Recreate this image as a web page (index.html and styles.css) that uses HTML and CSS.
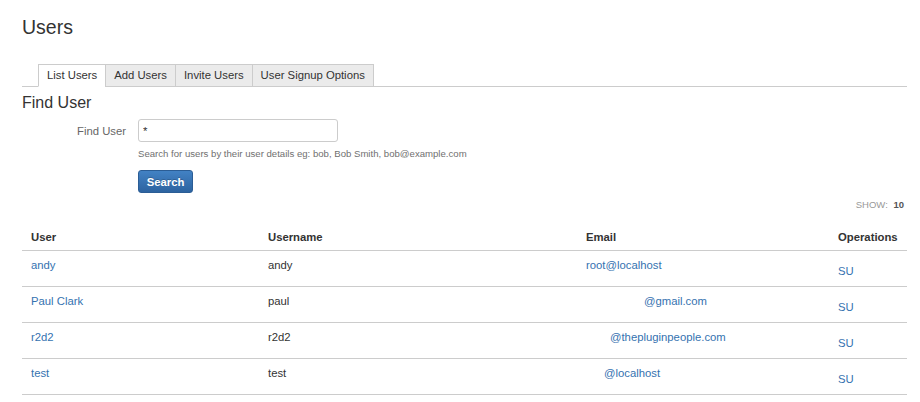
FILE: index.html
```html
<!DOCTYPE html>
<html lang="en">
<head>
<meta charset="utf-8">
<title>Users</title>
<link rel="stylesheet" href="styles.css">
</head>
<body>
<div class="page">
  <h1 class="title">Users</h1>
  <div class="tabs">
    <a class="tab active">List Users</a>
    <a class="tab">Add Users</a>
    <a class="tab">Invite Users</a>
    <a class="tab last">User Signup Options</a>
  </div>
  <h2 class="subtitle">Find User</h2>
  <form class="find-form">
    <div class="field-row">
      <label class="field-label" for="q">Find User</label>
      <input class="text-input" id="q" type="text" value="*">
    </div>
    <div class="help">Search for users by their user details eg: bob, Bob Smith, bob@example.com</div>
    <button class="btn-primary" type="button">Search</button>
  </form>
  <div class="show">SHOW: <b>10</b></div>
  <table class="users">
    <colgroup>
      <col class="c-user"><col class="c-username"><col class="c-email"><col class="c-ops">
    </colgroup>
    <thead>
      <tr><th>User</th><th>Username</th><th>Email</th><th>Operations</th></tr>
    </thead>
    <tbody>
      <tr><td><a href="#">andy</a></td><td>andy</td><td><a href="#">root@localhost</a></td><td class="ops"><a href="#">SU</a></td></tr>
      <tr><td><a href="#">Paul Clark</a></td><td>paul</td><td><span class="redacted r1"></span><a href="#">@gmail.com</a></td><td class="ops"><a href="#">SU</a></td></tr>
      <tr><td><a href="#">r2d2</a></td><td>r2d2</td><td><span class="redacted r2"></span><a href="#">@thepluginpeople.com</a></td><td class="ops"><a href="#">SU</a></td></tr>
      <tr><td><a href="#">test</a></td><td>test</td><td><span class="redacted r3"></span><a href="#">@localhost</a></td><td class="ops"><a href="#">SU</a></td></tr>
    </tbody>
  </table>
</div>
</body>
</html>
```

FILE: styles.css
```css
* { box-sizing: border-box; }
html, body { margin: 0; padding: 0; background: #fff; }
body {
  font-family: "Liberation Sans", Arial, sans-serif;
  font-size: 11.3px;
  color: #333;
}
a { color: #3572b0; text-decoration: none; }

.page { padding: 0 13px 0 22px; }

.title {
  margin: 0;
  padding-top: 15px;
  font-size: 19.5px;
  line-height: 24px;
  font-weight: normal;
  color: #333;
}

.tabs {
  display: flex;
  margin-top: 25px;
  padding-left: 16px;
  border-bottom: 1px solid #ccc;
}
.tab {
  display: block;
  height: 23px;
  line-height: 21px;
  padding: 0 8px;
  border-top: 1px solid #ccc;
  border-left: 1px solid #ccc;
  border-bottom: 1px solid #ccc;
  background: #ebebeb;
  color: #333;
  margin-bottom: -1px;
}
.tab.active { background: #fff; border-bottom-color: #fff; }
.tab.last { border-right: 1px solid #ccc; }

.subtitle {
  margin: 6px 0 0;
  font-size: 16px;
  line-height: 20px;
  font-weight: normal;
  color: #333;
}

.find-form { margin: 6px 0 0; }
.field-row { display: flex; align-items: center; gap: 12px; }
.field-label { width: 104px; text-align: right; color: #666; }
.text-input {
  width: 200px;
  height: 23px;
  border: 1px solid #ccc;
  border-radius: 3px;
  padding: 0 4px;
  font: inherit;
  color: #333;
  margin: 0;
}
.help {
  margin: 5px 0 0 116px;
  font-size: 9.6px;
  line-height: 14px;
  color: #707070;
}
.btn-primary {
  display: block;
  margin: 9px 0 0 116px;
  width: 55px;
  height: 23px;
  padding: 0;
  border: 1px solid #2b5d95;
  border-radius: 3px;
  background: linear-gradient(#4282c4, #2d63a0);
  color: #fff;
  font: bold 11.3px "Liberation Sans", Arial, sans-serif;
  text-shadow: 0 -1px 0 rgba(0,0,0,0.2);
}

.show {
  margin-top: 5px;
  padding-right: 3px;
  text-align: right;
  font-size: 9.5px;
  line-height: 14px;
  color: #999;
}
.show b { color: #555; margin-left: 3px; }

.users {
  margin-top: 11px;
  width: 100%;
  border-collapse: collapse;
  table-layout: fixed;
}
.c-user { width: 237px; }
.c-username { width: 318px; }
.c-email { width: 252px; }
.c-ops { width: 78px; }
.users th {
  text-align: left;
  font-weight: bold;
  line-height: 16px;
  padding: 6px 9px 5px;
  border-bottom: 1px solid #ccc;
  color: #333;
}
.users td {
  vertical-align: top;
  line-height: 16px;
  padding: 6px 9px 13px;
  border-bottom: 1px solid #ccc;
  white-space: nowrap;
}
.users td.ops { padding-top: 12px; padding-bottom: 7px; }
.redacted { display: inline-block; }
.r1 { width: 58px; }
.r2 { width: 24px; }
.r3 { width: 18px; }
```
